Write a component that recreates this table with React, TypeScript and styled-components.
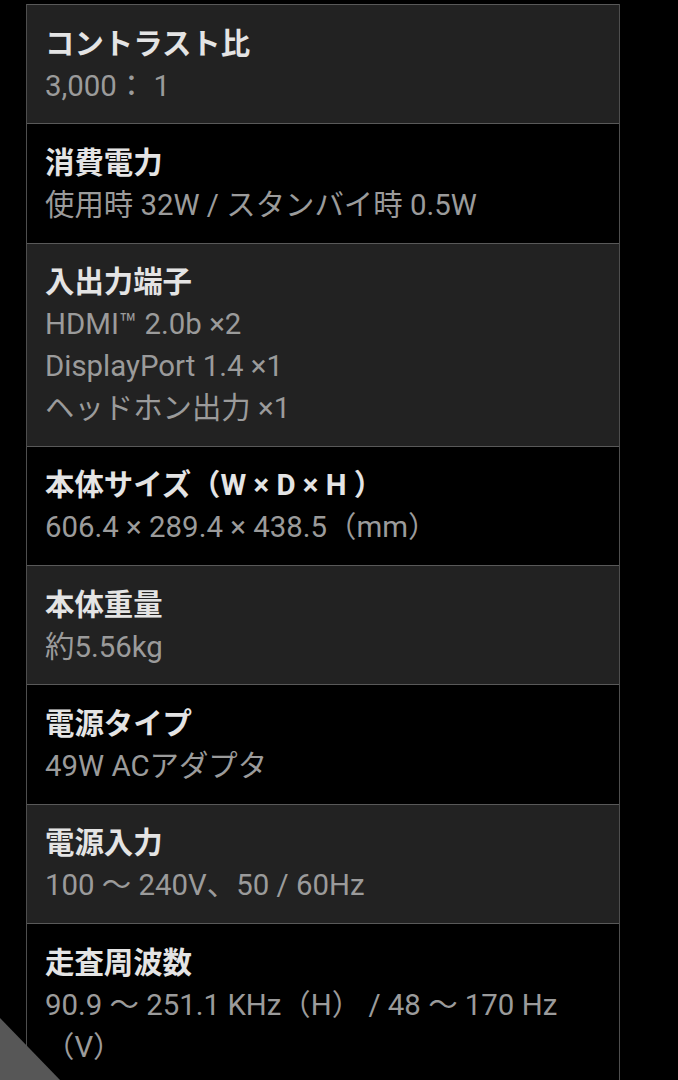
import React from 'react';
import styled, { createGlobalStyle } from 'styled-components';

const GlobalStyle = createGlobalStyle`
	* {
		box-sizing: border-box;
	}
	html,
	body {
		margin: 0;
		padding: 0;
		background-color: #000;
	}
	body {
		font-family: Roboto, 'Noto Sans CJK JP', sans-serif;
		-webkit-font-smoothing: antialiased;
	}
`;

const Page = styled.div`
	min-height: 1080px;
	padding: 4px 58px 0 26px;
	background-color: #000;
`;

const SpecList = styled.dl`
	margin: 0;
	border-left: 1px solid #4e4e4e;
	border-right: 1px solid #4e4e4e;
`;

const SpecRow = styled.div<{ $shaded: boolean }>`
	padding: 17.5px 18px 16.8px;
	border-top: 1px solid #595959;
	background-color: ${(p) => (p.$shaded ? '#222222' : '#000000')};
`;

const SpecTitle = styled.dt`
	margin: 0;
	font-size: 29.4px;
	line-height: 42px;
	font-weight: 700;
	color: #e4e4e4;
`;

const SpecValue = styled.dd`
	margin: 0;
	font-size: 29.4px;
	line-height: 42px;
	font-weight: 400;
	color: #9b9b9b;
`;

const CornerButton = styled.div`
	position: fixed;
	left: 0;
	bottom: 0;
	width: 60px;
	height: 62px;
	background-color: #575757;
	clip-path: polygon(0 0, 100% 100%, 0 100%);
`;

const specs: { title: string; values: string[] }[] = [
	{ title: 'コントラスト比', values: ['3,000： 1'] },
	{ title: '消費電力', values: ['使用時 32W / スタンバイ時 0.5W'] },
	{
		title: '入出力端子',
		values: ['HDMI™ 2.0b ×2', 'DisplayPort 1.4 ×1', 'ヘッドホン出力 ×1'],
	},
	{ title: '本体サイズ（W × D × H ）', values: ['606.4 × 289.4 × 438.5（mm）'] },
	{ title: '本体重量', values: ['約5.56kg'] },
	{ title: '電源タイプ', values: ['49W ACアダプタ'] },
	{ title: '電源入力', values: ['100 ～ 240V、50 / 60Hz'] },
	{ title: '走査周波数', values: ['90.9 ～ 251.1 KHz（H） / 48 ～ 170 Hz（V）'] },
];

const App: React.FC = () => {
	return (
		<>
			<GlobalStyle />
			<Page>
				<SpecList>
					{specs.map((spec, i) => (
						<SpecRow key={spec.title} $shaded={i % 2 === 0}>
							<SpecTitle>{spec.title}</SpecTitle>
							{spec.values.map((v) => (
								<SpecValue key={v}>{v}</SpecValue>
							))}
						</SpecRow>
					))}
				</SpecList>
			</Page>
			<CornerButton />
		</>
	);
};

export default App;
